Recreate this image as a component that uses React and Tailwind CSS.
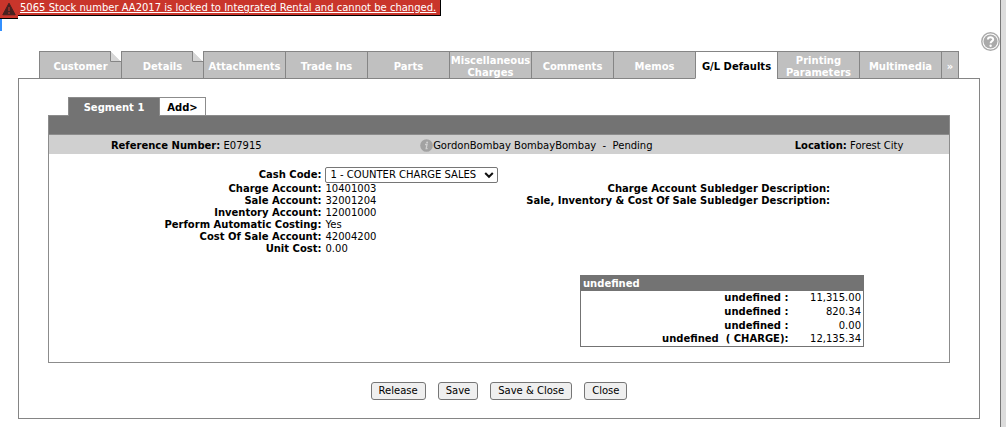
import React, { useState } from 'react';

const tabs = [
  { name: 'Customer', folded: true },
  { name: 'Details', folded: true },
  { name: 'Attachments' },
  { name: 'Trade Ins' },
  { name: 'Parts' },
  { name: 'Miscellaneous Charges' },
  { name: 'Comments' },
  { name: 'Memos' },
  { name: 'G/L Defaults' },
  { name: 'Printing Parameters' },
  { name: 'Multimedia' },
];

const accounts = [
  ['Charge Account:', '10401003'],
  ['Sale Account:', '32001204'],
  ['Inventory Account:', '12001000'],
  ['Perform Automatic Costing:', 'Yes'],
  ['Cost Of Sale Account:', '42004200'],
  ['Unit Cost:', '0.00'],
];

const totals = [
  ['undefined :', '11,315.00'],
  ['undefined :', '820.34'],
  ['undefined :', '0.00'],
  ['undefined \u00a0( CHARGE):', '12,135.34'],
];

const Fold = () => (
  <svg className="absolute -top-px right-0 h-[11px] w-[11px]" viewBox="0 0 11 11" aria-hidden="true">
    <path d="M0 0H11V11Z" fill="#fff" />
    <path d="M0 0L11 11H0Z" fill="#d6d6d6" />
    <path d="M0.5 0V10.5H11" fill="none" stroke="#858585" />
  </svg>
);

const Banner = () => (
  <div className="flex items-start" role="alert">
    <div className="flex h-[19px] w-[18px] items-center justify-center border-b border-black bg-[#c9352b]">
      <svg className="h-[14px] w-[14px]" viewBox="0 0 14 14" aria-hidden="true">
        <path d="M7 1.2L13.2 12.8H0.8Z" fill="#47201f" stroke="#47201f" strokeLinejoin="round" />
        <path d="M7 5V9" stroke="#a5322b" strokeWidth="1.4" />
        <circle cx="7" cy="11" r="0.9" fill="#a5322b" />
      </svg>
    </div>
    <div className="h-4 border-r border-b border-black bg-[#c9352b] pr-1 pl-0.5">
      <a href="#stock" className="block leading-[15px] text-white underline">
        5065 Stock number AA2017 is locked to Integrated Rental and cannot be changed.
      </a>
    </div>
  </div>
);

const ActionButton = ({ children }) => (
  <button type="button" className="h-[18px] rounded-[3px] border border-[#767676] bg-[#efefef] px-[7px] leading-4">
    {children}
  </button>
);

const App = () => {
  const [activeTab, setActiveTab] = useState('G/L Defaults');

  return (
    <div className="flex min-h-screen bg-white font-['DejaVu_Sans',sans-serif] text-[10px] leading-3 text-black">
      <div className="min-w-0 flex-1">
        <Banner />
        <div className="flex items-start justify-between">
          <div className="h-3 w-0.5 bg-[#3390ff]" />
          <button type="button" aria-label="Help" className="mt-[13px]">
            <svg className="h-[19px] w-[19px]" viewBox="0 0 19 19" aria-hidden="true">
              <circle cx="9.5" cy="9.5" r="8.7" fill="#fff" stroke="#aaa" strokeWidth="1.4" />
              <circle cx="9.5" cy="9.5" r="7" fill="#aaa" />
              <path d="M6.9 7.6C6.9 4.5 12.2 4.6 12.2 7.4C12.2 9.1 9.6 9.2 9.6 11.3" fill="none" stroke="#fff" strokeWidth="2" />
              <circle cx="9.6" cy="13.7" r="1.2" fill="#fff" />
            </svg>
          </button>
        </div>

        <main className="mr-5 ml-[18px]">
          {/* Main tabs */}
          <nav className="relative z-10 ml-[21px] -mb-px flex h-7 font-bold">
            {tabs.map(({ name, folded }) => (
              <button
                key={name}
                type="button"
                onClick={() => setActiveTab(name)}
                className={`relative flex w-[82px] items-center justify-center border-t border-b border-l border-[#858585] pt-[3px] text-center ${activeTab === name ? 'border-b-white bg-white text-black' : 'bg-[#c0c0c0] text-white'}`}
              >
                {name}
                {folded && <Fold />}
              </button>
            ))}
            <button type="button" className="w-[18px] border border-[#858585] bg-[#c0c0c0] pt-[3px] text-white">
              »
            </button>
          </nav>

          <div className="border border-[#858585] px-[29px] pt-[18px] pb-[18px]">
            {/* Segment tabs */}
            <div className="relative z-10 ml-5 -mb-px flex h-[19px] font-bold">
              <button type="button" className="w-[91px] border-t border-l border-[#8c8c8c] bg-[#737373] pt-0.5 text-white">
                Segment 1
              </button>
              <button type="button" className="w-[47px] border border-[#8c8c8c] bg-white pt-0.5">
                Add&gt;
              </button>
            </div>

            <section className="border border-[#8c8c8c] pb-[15px]">
              <div className="h-[19px] border-b border-[#8c8c8c] bg-[#737373]" />
              <div className="grid h-[19px] grid-cols-[30.5%_47.3%_22.2%] items-center bg-[#d0d0d0] pt-0.5 text-center">
                <div><b>Reference Number:</b> E07915</div>
                <div className="flex items-center justify-center">
                  <svg className="h-[13px] w-[13px]" viewBox="0 0 13 13" aria-hidden="true">
                    <circle cx="6.5" cy="6.5" r="6.3" fill="#a2a2a2" />
                    <circle cx="7.1" cy="3.4" r="1" fill="#d0d0d0" />
                    <path d="M5 5.5H7L6.2 9.7H7.6" fill="none" stroke="#d0d0d0" strokeWidth="1.3" />
                  </svg>
                  GordonBombay BombayBombay&nbsp; -&nbsp; Pending
                </div>
                <div><b>Location:</b> Forest City</div>
              </div>

              <div className="mt-[13px] flex items-start">
                <div className="grid w-1/2 grid-cols-[61%_1fr]">
                  <label htmlFor="cash-code" className="flex h-4 items-center justify-end pr-0.5 font-bold">Cash Code:</label>
                  <div className="relative justify-self-start pl-px">
                    <select
                      id="cash-code"
                      className="block h-4 w-[173px] appearance-none rounded-[2px] border border-[#767676] bg-white pl-[5px] leading-[14px]"
                    >
                      <option>1 - COUNTER CHARGE SALES</option>
                    </select>
                    <svg className="pointer-events-none absolute top-1 right-1 h-2 w-[10px]" viewBox="0 0 10 8" aria-hidden="true">
                      <path d="M1.2 2L5 5.8L8.8 2" fill="none" stroke="#111" strokeWidth="2" />
                    </svg>
                  </div>
                  {accounts.map(([label, value]) => (
                    <React.Fragment key={label}>
                      <div className="pr-0.5 text-right font-bold">{label}</div>
                      <div className="pl-0.5">{value}</div>
                    </React.Fragment>
                  ))}
                </div>
                <div className="mt-4 w-[37%] pr-0.5 text-right font-bold">
                  <div>Charge Account Subledger Description:</div>
                  <div>Sale, Inventory &amp; Cost Of Sale Subledger Description:</div>
                </div>
              </div>

              <table className="mt-5 mr-[85px] ml-auto w-[284px] border-collapse border border-[#737373]">
                <thead>
                  <tr className="h-[15px] bg-[#737373] text-left text-white">
                    <th colSpan={2} className="px-0.5 pt-0.5 pb-0">undefined</th>
                  </tr>
                </thead>
                <tbody>
                  {totals.map(([label, value], i) => (
                    <tr key={i} className="h-[14px] text-right">
                      <th className="p-0 text-right">{label}</th>
                      <td className="w-[75px] py-0 pr-0.5">{value}</td>
                    </tr>
                  ))}
                </tbody>
              </table>
            </section>

            <div className="mt-[19px] flex justify-center gap-3">
              <ActionButton>Release</ActionButton>
              <ActionButton>Save</ActionButton>
              <ActionButton>Save &amp; Close</ActionButton>
              <ActionButton>Close</ActionButton>
            </div>
          </div>
        </main>
      </div>
      <div className="w-1.5 border-l border-[#777] bg-[#dcdcdc]" />
    </div>
  );
};

export default App;
